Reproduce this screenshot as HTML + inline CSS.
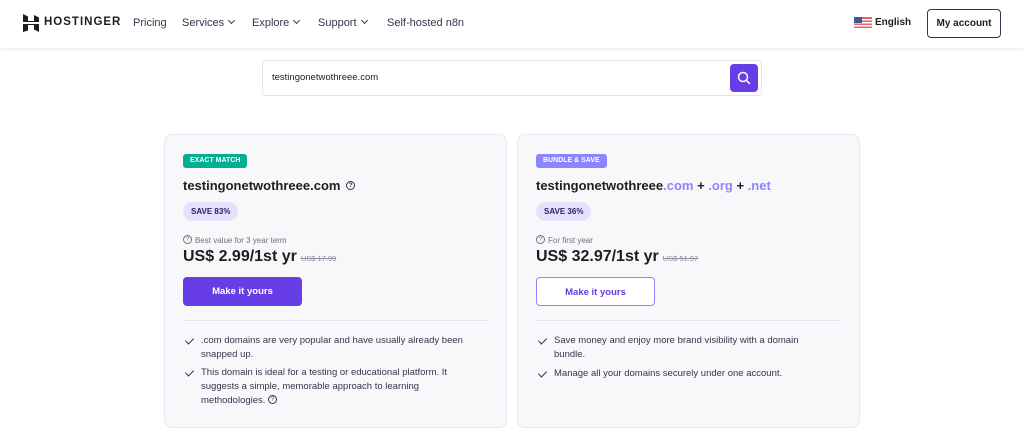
<!DOCTYPE html>
<html><head><style>
*{box-sizing:border-box;margin:0;padding:0}
body{width:1024px;height:444px;overflow:hidden;background:#fff;font-family:"Liberation Sans",sans-serif;color:#1d1e20;position:relative}
.hdr{position:absolute;left:0;top:0;width:1024px;height:48px;background:#fff;box-shadow:0 2px 4px rgba(0,0,0,0.07)}
.a{position:absolute;white-space:nowrap}
.nav{font-size:11px;top:17px;color:#36344d}
.chev{display:inline-block;width:5px;height:5px;border-right:1.3px solid #36344d;border-bottom:1.3px solid #36344d;transform:rotate(45deg);margin-left:5px;position:relative;top:-3px}
.card{position:absolute;top:134px;width:343px;height:294px;background:#f8f8fa;border:1px solid #e6e8f5;border-radius:8px}
.tag{position:absolute;left:18px;top:19px;height:14px;border-radius:3px;font-size:7px;font-weight:bold;color:#fff;padding:0 7px;line-height:14px}
.title{position:absolute;left:18px;top:43px;font-size:13px;font-weight:bold}
.save{position:absolute;left:18px;top:67px;height:19px;border-radius:10px;background:#e5e0fb;font-size:8px;font-weight:bold;padding:0 8px;line-height:19px;color:#2f1c6a}
.note{position:absolute;left:18px;top:101px;font-size:8px;color:#6d7081;line-height:10px}
.q{display:inline-block;width:9px;height:9px;border:1px solid #6d7081;border-radius:50%;font-size:6.5px;line-height:7px;text-align:center;margin-right:3px;vertical-align:middle;position:relative;top:-1px}
.price{position:absolute;left:18px;top:113px;font-size:16px;font-weight:bold}
.old{font-size:7.5px;color:#8c8e9c;text-decoration:line-through;font-weight:normal;margin-left:4px}
.btn{position:absolute;left:18px;top:142px;width:119px;height:29px;border-radius:4px;font-size:9.5px;font-weight:bold;text-align:center;line-height:29px}
.hr{position:absolute;left:18px;right:18px;top:185px;border-top:1px solid #e3e4ee}
.li{position:absolute;left:36px;font-size:9.5px;line-height:14px;color:#36344d;width:280px;white-space:normal}
.li:before{content:"";position:absolute;left-14px;left:-14px;top:2px;width:4px;height:7px;border-right:1.4px solid #36344d;border-bottom:1.4px solid #36344d;transform:rotate(45deg)}
.b{color:#8c85ff}
</style></head><body>
<div class="hdr">
 <svg class="a" style="left:23px;top:14px" width="16" height="18" viewBox="0 0 16 18"><path d="M0 0l5 2.5v4.5l6 0V1l5 2.5V8H0z M0 10h16v8l-5-2.5V11H5v5.5L0 18z" fill="#1d1e20"/></svg>
 <div class="a" style="left:44px;top:16px;font-size:11.5px;font-weight:bold;letter-spacing:1px">HOSTINGER</div>
 <div class="a nav" style="left:133px">Pricing</div>
 <div class="a nav" style="left:182px">Services<span class="chev"></span></div>
 <div class="a nav" style="left:252px">Explore<span class="chev"></span></div>
 <div class="a nav" style="left:318px">Support<span class="chev"></span></div>
 <div class="a nav" style="left:387px">Self-hosted n8n</div>
 <svg class="a" style="left:854px;top:17px" width="18" height="11"><rect width="18" height="11" fill="#e06666"/><rect y="2" width="18" height="1.5" fill="#fff"/><rect y="5" width="18" height="1.5" fill="#fff"/><rect y="8" width="18" height="1.5" fill="#fff"/><rect width="8" height="6" fill="#3c5a9a"/></svg>
 <div class="a" style="left:875px;top:17px;font-size:10px;font-weight:bold">English</div>
 <div class="a" style="left:927px;top:9px;width:74px;height:29px;border:1px solid #36344d;border-radius:4px;font-size:10px;font-weight:bold;text-align:center;line-height:27px">My account</div>
</div>
<div class="a" style="left:262px;top:60px;width:500px;height:36px;border:1px solid #e3e4ee;border-radius:4px"></div>
<div class="a" style="left:272px;top:72px;font-size:9.5px">testingonetwothreee.com</div>
<div class="a" style="left:730px;top:64px;width:28px;height:28px;background:#673de6;border-radius:4px">
 <svg width="28" height="28"><circle cx="13" cy="13" r="4.5" fill="none" stroke="#fff" stroke-width="1.5"/><path d="M16.3 16.3L19.5 19.5" stroke="#fff" stroke-width="1.5" stroke-linecap="round"/></svg>
</div>

<div class="card" style="left:164px">
 <div class="tag" style="background:#00b090">EXACT MATCH</div>
 <div class="title">testingonetwothreee.com <span class="q" style="border-color:#36344d;color:#36344d;margin-left:2px">?</span></div>
 <div class="save">SAVE 83%</div>
 <div class="note"><span class="q">?</span>Best value for 3 year term</div>
 <div class="price">US$ 2.99/1st yr<span class="old">US$ 17.99</span></div>
 <div class="btn" style="background:#673de6;color:#fff">Make it yours</div>
 <div class="hr"></div>
 <div class="li" style="top:199px;width:285px">.com domains are very popular and have usually already been snapped up.</div>
 <div class="li" style="top:231px;width:275px">This domain is ideal for a testing or educational platform. It suggests a simple, memorable approach to learning methodologies. <span class="q" style="border-color:#36344d;color:#36344d">?</span></div>
</div>

<div class="card" style="left:517px">
 <div class="tag" style="background:#8c85ff">BUNDLE &amp; SAVE</div>
 <div class="title">testingonetwothreee<span class="b">.com</span> + <span class="b">.org</span> + <span class="b">.net</span></div>
 <div class="save">SAVE 36%</div>
 <div class="note"><span class="q">?</span>For first year</div>
 <div class="price">US$ 32.97/1st yr<span class="old">US$ 51.97</span></div>
 <div class="btn" style="border:1px solid #8c85ff;color:#673de6;background:#fff">Make it yours</div>
 <div class="hr"></div>
 <div class="li" style="top:199px;width:275px">Save money and enjoy more brand visibility with a domain bundle.</div>
 <div class="li" style="top:232px">Manage all your domains securely under one account.</div>
</div>
</body></html>
